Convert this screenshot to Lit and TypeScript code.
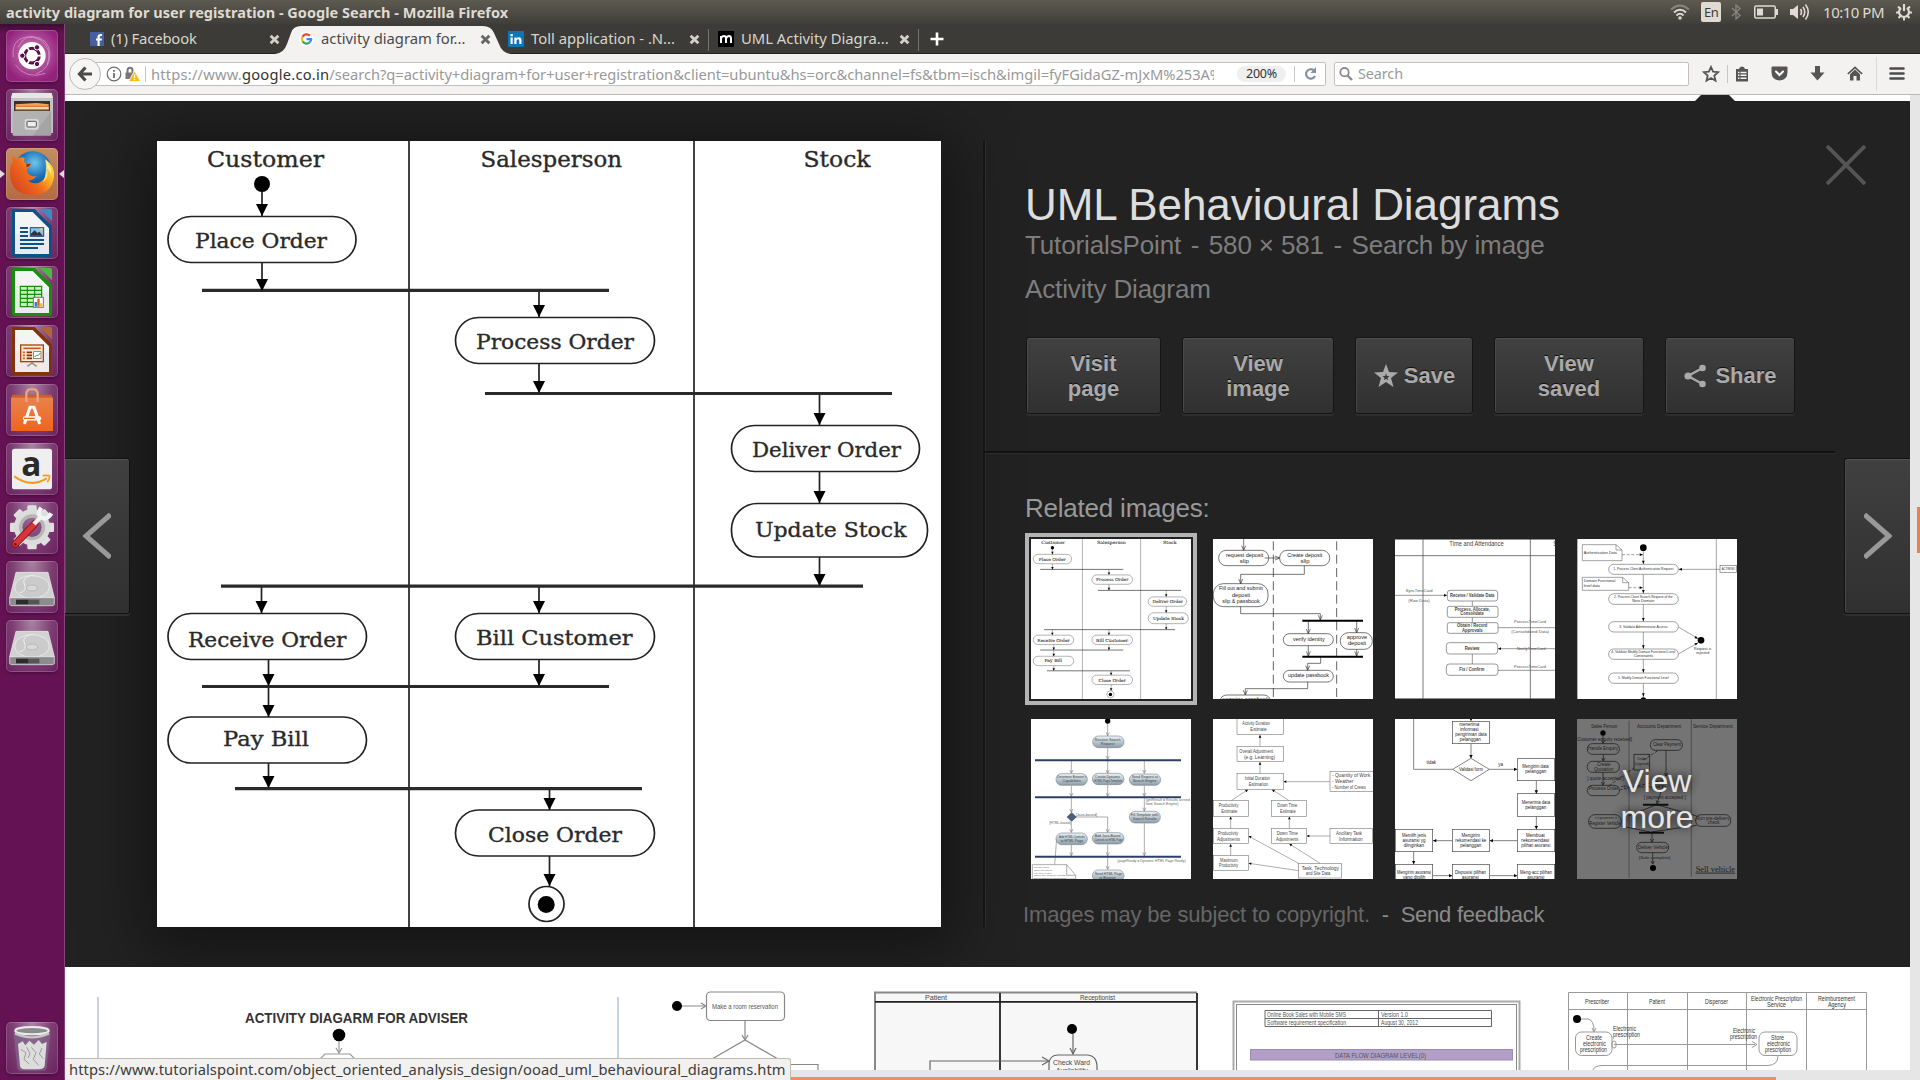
import { LitElement, html, svg, css } from "lit";
import { customElement } from "lit/decorators.js";

/* ---------- drawing helpers ---------- */

// Text squeezed between x1 and x2 on a baseline.
const span = (x1: number, x2: number, y: number, size: number, s: string, cls = "") =>
  svg`<text class=${cls} x=${x1} y=${y} font-size=${size} textLength=${x2 - x1} lengthAdjust="spacingAndGlyphs">${s}</text>`;

const mid = (cx: number, y: number, size: number, s: string) =>
  svg`<text x=${cx} y=${y} font-size=${size} text-anchor="middle">${s}</text>`;

const box = (x: number, y: number, x2: number, y2: number, r = 0) =>
  svg`<rect x=${x} y=${y} width=${x2 - x} height=${y2 - y} rx=${r}></rect>`;

const line = (d: string) => svg`<path d=${d} fill="none"></path>`;

// Solid arrow head whose tip is at x,y; deg 0 points down.
const head = (x: number, y: number, deg = 0, w = 6, h = 12) =>
  svg`<path class="solid" transform="translate(${x} ${y}) rotate(${deg})" d="M0 0L${-w} ${-h}H${w}Z"></path>`;

const open = (x: number, y: number, deg = 0, w = 6, h = 14) =>
  svg`<path transform="translate(${x} ${y}) rotate(${deg})" fill="none" d="M${-w} ${-h}L0 0L${w} ${-h}"></path>`;

const dot = (x: number, y: number, r: number) => svg`<circle class="solid" cx=${x} cy=${y} r=${r}></circle>`;

/* ---------- main activity diagram ---------- */

const orderFlow = () => html`<svg class="dia order" viewBox="157 141 784 786" preserveAspectRatio="none">
  <g stroke="#222" stroke-width="1.7" fill="#fff">
    ${line("M409 141V927M694 141V927")}
    ${box(168, 216.5, 356, 262.5, 23)}${box(455.5, 317.5, 654.5, 363.5, 23)}
    ${box(731.5, 425.5, 919.5, 471.5, 23)}${box(731.5, 503.5, 927.5, 557, 26)}
    ${box(168, 613.5, 366.5, 659.5, 23)}${box(455.5, 613.5, 654.5, 659.5, 23)}
    ${box(168, 717, 366.5, 763, 23)}${box(455.5, 810, 654.5, 856, 23)}
    <circle cx="546.5" cy="904" r="17.5"></circle>
    ${line("M262 184V216M262 263V290M539 290V317M539 364V393M819.5 393V425M819.5 472V503M819.5 557V586M261.5 586V613M539 586V613M268.5 660V686M539 660V686M268.5 687V717M268.5 763V788M549.5 788V810M549.5 856V886")}
  </g>
  <g stroke="#2a2a2a" stroke-width="3.2">
    ${line("M202 290.3H609M485 393.5H892M221 586.2H863M202 686.5H609M235 788.6H642")}
  </g>
  ${dot(262, 184, 8)}${dot(546.2, 904.5, 8.5)}
  ${[[262, 216], [262, 291], [539, 317], [539, 393], [819.5, 425], [819.5, 503], [819.5, 586], [261.5, 613], [539, 613], [268.5, 686], [539, 686], [268.5, 717], [268.5, 788], [549.5, 810], [549.5, 886]].map(([x, y]) => head(x, y))}
  <g class="serif">
    ${span(207, 324, 166.5, 21.5, "Customer")}${span(480.5, 622, 166.5, 21.5, "Salesperson")}${span(803.5, 870.5, 166.5, 21.5, "Stock")}
    ${span(195, 327, 247.7, 20.5, "Place Order")}${span(476, 634, 349, 20.5, "Process Order")}
    ${span(752, 901, 457, 20.5, "Deliver Order")}${span(755, 906.5, 536.5, 20.5, "Update Stock")}
    ${span(188, 346.5, 646.5, 20.5, "Receive Order")}${span(476, 632.5, 645, 20.5, "Bill Customer")}
    ${span(223, 309, 745.5, 20.5, "Pay Bill")}${span(488, 622, 841.5, 20.5, "Close Order")}
  </g>
</svg>`;

/* ---------- thumbnails (each on its own 480-unit canvas) ---------- */

const depositFlow = () => html`<svg class="dia" viewBox="609 177 480 480">
  <g stroke="#333" stroke-width="2" fill="#fff">
    <path fill="none" stroke="#444" stroke-width="2.5" stroke-dasharray="27 13" d="M790 184V657M980 184V657"></path>
    ${box(626, 211, 776, 257, 22)}${box(809, 211, 959, 257, 22)}${box(610, 311, 774, 380, 30)}
    ${box(820, 461, 970, 497, 18)}${box(991, 458, 1087, 508, 24)}${box(820, 571, 970, 606, 18)}${box(630, 645, 782, 690, 20)}
    ${line("M701 177V211M764 234H809M883 257V283H692V311M692 380V401H931V421M895 424V461M1040 424V458M895 497V528M1040 508V528M932 532V550H893V571M893 606V626H706V645")}
    ${open(701, 211)}${open(809, 234, -90)}${open(692, 311)}${open(931, 420)}${open(895, 461)}${open(1040, 458)}${open(895, 528)}${open(1040, 528)}${open(893, 571)}${open(706, 645)}
  </g>
  <path stroke="#000" stroke-width="6" d="M877 422H1059M877 530H1059"></path>
  <g class="sans" fill="#222">
    ${span(648, 760, 230, 18, "request deposit")}${mid(703, 249, 18, "slip")}${span(832, 937, 230, 18, "Create deposit")}${mid(885, 249, 18, "slip")}
    ${span(627, 758, 330, 18, "Fill out and submit")}${mid(693, 350, 17, "deposit")}${span(637, 749, 369, 18, "slip & passbook")}
    ${span(849, 944, 482, 18, "verify identity")}${mid(1041, 476, 17, "approve")}${mid(1041, 496, 17, "deposit")}
    ${span(834, 957, 590, 18, "update passbook")}${span(637, 776, 662, 18, "examine passbook")}
  </g>
</svg>`;

const attendance = () => html`<svg class="dia" viewBox="45 177 480 480">
  <g stroke="#555" stroke-width="2.4" fill="none">${line("M45 178H525M45 227H525M129 177V657M451 177V657M45 656H525")}</g>
  <g stroke="#666" stroke-width="2" fill="#fff">
    ${line("M45 346H200M277 363V379M277 412V428M277 522V552M354 443H525M354 506H525M354 571H525")}
    ${box(202, 331, 353, 363, 8)}${box(202, 379, 354, 412, 6)}${box(202, 428, 354, 460, 6)}${box(199, 488, 353, 522, 9)}${box(199, 552, 354, 586, 9)}
    ${head(201, 346, -90, 4, 9)}${head(354, 506, 90, 4, 9)}
  </g>
  <g class="sans">
    <g fill="#444">${span(208, 371, 197, 19, "Time and Attendance")}${mid(526, 197, 19, "S")}</g>
    <g fill="#555">${span(77, 158, 336, 13, "SyncTimeCard")}${span(85, 149, 365, 13, "(Raw Data)")}${span(402, 498, 428, 13, "ProcessTimeCard")}${span(394, 507, 458, 13, "(Consolidated Data)")}${span(411, 497, 510, 13, "NotifyTimeCard")}${span(402, 498, 563, 13, "ProcessTimeCard")}</g>
    <g font-weight="bold" fill="#444">${span(210, 343, 351, 14, "Receive / Validate Data")}${span(224, 330, 392, 14, "Process, Allocate,")}${span(241, 311, 406, 14, "Consolidate")}${span(231, 322, 441, 14, "Obtain / Record")}${span(246, 308, 455, 14, "Approvals")}${span(254, 298, 509, 14, "Review")}${span(238, 313, 574, 14, "Fix / Confirm")}</g>
  </g>
</svg>`;

const authFlow = () => html`<svg class="dia" viewBox="591 177 480 480">
  <g stroke="#666" stroke-width="1.8" fill="#fff">
    ${line("M592 177V657M1009 177V657M790 203V657M895 268H1020M895 441L953 475M895 522L953 489")}
    <path fill="none" stroke-dasharray="9 5" d="M726 224H788M746 323H788"></path>
    <path d="M607 194H708L726 210V242H607ZM708 194V210H726M607 292H728L746 308V331H607ZM728 292V308H746"></path>
    ${box(686, 253, 895, 283, 15)}${box(686, 341, 895, 373, 16)}${box(686, 425, 895, 456, 15)}${box(686, 507, 895, 538, 15)}${box(686, 579, 895, 610, 15)}${box(1020, 257, 1069, 278)}
  </g>
  ${dot(790, 203, 10)}${dot(963, 481, 10)}${dot(790, 661, 9)}
  ${[252, 340, 424, 506, 578, 650].map((y) => head(790, y, 0, 4, 10))}
  ${head(789, 224, -90, 4, 10)}${head(789, 323, -90, 4, 10)}${head(896, 268, 90, 4, 10)}${head(954, 476, -60, 4, 10)}${head(954, 488, -120, 4, 10)}
  <g class="sans" fill="#333">
    ${span(611, 711, 221, 12, "Authentication Data")}${span(611, 706, 307, 12, "Domain Functional")}${span(611, 660, 320, 12, "level data")}
    ${span(700, 880, 271, 11.5, "1. Process Client Authentication Request")}${span(702, 878, 354, 11.5, "2. Process Client Search Request of the")}${mid(790, 365, 11.5, "New Domain")}
    ${span(718, 862, 444, 11.5, "3. Validate Administrator Access")}${span(694, 886, 520, 11.5, "4. Validate Modify Domain Functional Level")}${mid(790, 530, 11.5, "Constraints")}
    ${span(714, 866, 597, 11.5, "5. Modify Domain Functional Level")}${span(1025, 1066, 271, 10, "ACTIMISO")}${mid(968, 511, 11, "Request is")}${mid(968, 522, 11, "rejected")}
  </g>
</svg>`;

const searchFlow = () => html`<svg class="dia" viewBox="63 717 480 480">
  <defs><linearGradient id="pill" x2="0" y2="1"><stop offset="0" stop-color="#eef3f5"></stop><stop offset="1" stop-color="#8b9ca6"></stop></linearGradient></defs>
  <g stroke="#777" stroke-width="1.8">
    ${line("M293 724V767M293 804V838M184 843V880M293 843V880M403 843V880M184 917V950M293 915V950M403 917V950M403 954V993M184 954V997M199 1011H293V1057M184 1026V1057M184 1095V1128M293 1093V1128M403 1030V1128M293 1132V1168M140 1076L134 1154")}
    ${[[293, 767], [293, 838], [184, 880], [293, 880], [403, 880], [184, 949], [293, 949], [403, 949], [403, 993], [184, 997], [293, 1057], [184, 1057], [184, 1127], [293, 1127], [403, 1127], [293, 1168]].map(([x, y]) => open(x, y, 0, 5, 10))}
    <path fill="#fff" d="M67 1154H170L197 1186V1197H67ZM170 1154V1186H197"></path>
  </g>
  <path stroke="#2c3f66" stroke-width="6" d="M75 841H513M75 952H513M75 1130H513"></path>
  <g fill="url(#pill)" stroke="#7d8d96" stroke-width="2">
    ${box(248, 768, 342, 803, 17)}${box(138, 881, 232, 916, 17)}${box(247, 880, 342, 914, 17)}${box(358, 882, 452, 916, 17)}${box(358, 994, 451, 1029, 17)}${box(138, 1059, 232, 1094, 17)}${box(247, 1058, 342, 1092, 17)}${box(247, 1170, 342, 1204, 17)}
  </g>
  <path fill="#4b5e7c" d="M170 1011L185 997L200 1011L185 1025Z"></path>
  ${dot(293, 723, 8)}
  <g class="sans" fill="#3b464e">
    ${mid(293, 782, 11, "Receive Search")}${mid(293, 794, 11, "Request")}${span(142, 229, 895, 10.5, "Determine Browser's")}${mid(185, 907, 10.5, "Capabilities")}${mid(293, 894, 10.5, "Create Dynamic")}${span(253, 337, 905, 10.5, "HTML Page Template")}${span(365, 444, 895, 11, "Send Request to")}${mid(404, 907, 11, "Search Engine")}
    ${span(362, 445, 1007, 10.5, "Fill Template with")}${mid(404, 1019, 10.5, "Search Results")}${span(147, 224, 1074, 10.5, "Add HTML Controls")}${mid(185, 1085, 10.5, "to HTML Page")}${mid(293, 1072, 10.5, "Add Java-Based")}${span(254, 338, 1083, 10.5, "Controls to HTML Page")}${span(254, 337, 1186, 11, "Send HTML Page")}${mid(293, 1196, 10.5, "to Browser")}
    <g fill="#666">${span(407, 540, 964, 11, "(getResult = Results arrived")}${span(407, 505, 976, 11, "from Search Engine)")}${span(197, 261, 1007, 11, "[Java-based]")}${span(118, 182, 1031, 11, "[HTML-based]")}${span(322, 527, 1147, 11, "(pageReady = Dynamic HTML Page Ready)")}
    ${span(71, 118, 1165, 7.5, "Navigation controls,")}${span(71, 126, 1173, 7.5, "whether Java-based or")}${span(71, 124, 1181, 7.5, "HTML-based, are added")}${span(71, 166, 1189, 7.5, "when the search results")}${span(71, 168, 1196, 7.5, "are available in HTML form")}</g>
  </g>
</svg>`;

const durationFlow = () => html`<svg class="dia" viewBox="609 717 480 480">
  <g stroke="#777" stroke-width="1.8" fill="#fff">
    ${box(681, 715, 820, 763)}${box(681, 799, 820, 845)}${box(681, 881, 820, 928)}${box(960, 875, 1092, 934)}${box(610, 962, 715, 1009)}${box(785, 962, 889, 1009)}
    ${box(610, 1045, 715, 1090)}${box(785, 1045, 889, 1090)}${box(960, 1045, 1088, 1090)}${box(610, 1126, 715, 1172)}${box(866, 1150, 995, 1194)}
    ${line("M750 799V765M750 881V847M960 905H822M664 962L713 929M837 962L787 929M662 1045V1011M838 1045V1011M960 1068H891M662 1126V1092M866 1150L717 1069M930 1150L839 1092M866 1172L717 1150")}
  </g>
  ${[[750, 765, 180], [750, 846, 180], [821, 905, 90], [714, 929, -124], [786, 929, 124], [662, 1010, 180], [838, 1010, 180], [890, 1068, 90], [662, 1092, 180], [716, 1068, 118], [838, 1092, 122], [716, 1150, 98]].map(([x, y, d]) => head(x, y, d, 4, 8))}
  <g class="sans" fill="#444">
    ${span(697, 780, 736, 15, "Activity Duration")}${span(721, 770, 753, 15, "Estimate")}${span(688, 789, 818, 15, "Overall Adjustment")}${span(702, 795, 836, 15, "(e.g. Learning)")}${span(704, 780, 900, 15, "Initial Duration")}${span(716, 774, 917, 15, "Estimation")}
    ${span(966, 1081, 892, 15, "- Quantity of Work")}${span(966, 1030, 908, 15, "- Weather")}${span(966, 1067, 926, 15, "- Number of Crews")}
    ${span(626, 685, 981, 15, "Productivity")}${span(634, 682, 999, 15, "Estimate")}${span(802, 862, 981, 15, "Down Time")}${span(810, 857, 999, 15, "Estimate")}
    ${span(624, 685, 1064, 15, "Productivity")}${span(621, 690, 1082, 15, "Adjustments")}${span(800, 864, 1064, 15, "Down Time")}${span(798, 865, 1082, 15, "Adjustments")}${span(978, 1056, 1064, 15, "Ancillary Task")}${span(987, 1058, 1082, 15, "Information")}
    ${span(630, 683, 1145, 15, "Maximum")}${span(627, 684, 1162, 15, "Productivity")}${span(875, 987, 1169, 15, "Task, Technology")}${span(887, 961, 1185, 15, "and Site Data")}
  </g>
</svg>`;

const insuranceFlow = () => html`<svg class="dia" viewBox="45 717 480 480">
  <g stroke="#444" stroke-width="2" fill="#fff">
    ${line("M101 717V868H218M273 791V835M328 868H412M469 902V941M469 1009V1048M412 1082H330M217 1082H159M101 1115V1153M158 1187H217M328 1187H412")}
    ${box(217, 724, 328, 791)}<path d="M273 835L328 868L273 902L218 868Z"></path>
    ${box(412, 836, 524, 902)}${box(412, 941, 524, 1009)}${box(412, 1048, 524, 1115)}${box(217, 1048, 328, 1115)}${box(46, 1048, 158, 1115)}${box(46, 1153, 158, 1220)}${box(217, 1153, 328, 1220)}${box(412, 1153, 524, 1220)}
  </g>
  ${[[273, 724, 0], [273, 835, 0], [412, 868, -90], [469, 941, 0], [469, 1048, 0], [329, 1082, 90], [159, 1082, 90], [101, 1153, 0], [217, 1187, -90], [412, 1187, -90]].map(([x, y, d]) => head(x, y, d, 5, 10))}
  <g class="sans" fill="#222">
    ${mid(268, 738, 13.5, "menerima")}${mid(268, 753, 13.5, "informasi")}${span(226, 320, 768, 13.5, "pengiriman data")}${mid(271, 783, 13.5, "pelanggan")}${span(237, 309, 872, 13.5, "Validasi form")}${mid(154, 852, 13.5, "tidak")}${mid(362, 857, 13.5, "ya")}
    ${span(427, 506, 864, 13.5, "Mengirim data")}${mid(467, 879, 13.5, "pelanggan")}${span(425, 510, 972, 13.5, "Menerima data")}${mid(467, 987, 13.5, "pelanggan")}
    ${mid(466, 1071, 13.5, "Membuat")}${span(424, 508, 1085, 13.5, "rekomendasi")}${span(424, 511, 1100, 13.5, "pilihan asuransi")}${mid(272, 1071, 13.5, "Mengirim")}${span(226, 319, 1085, 13.5, "rekomendasi ke")}${mid(272, 1100, 13.5, "pelanggan")}
    ${span(66, 138, 1071, 13.5, "Memilih jenis")}${mid(102, 1085, 13.5, "asuransi yg")}${mid(102, 1100, 13.5, "diinginkan")}${span(51, 153, 1183, 13.5, "Mengirim asuransi")}${mid(102, 1197, 13.5, "yang dipilih")}${span(225, 318, 1183, 13.5, "Disposisi pilihan")}${mid(271, 1197, 13.5, "asuransi")}${span(420, 516, 1183, 13.5, "Meng-acc pilihan")}${mid(467, 1197, 13.5, "asuransi")}
  </g>
</svg>`;

const vehicleFlow = () => html`<svg class="dia dim" viewBox="591 717 480 480">
  <g stroke="#222" stroke-width="2.4" fill="none">
    <path stroke="#444" d="M747 722V1193M934 717V1190"></path>
    ${box(622, 791, 718, 823, 15)}${box(622, 844, 718, 877, 15)}${box(622, 916, 718, 947, 15)}${box(811, 779, 907, 811, 15)}${box(762, 823, 809, 870)}${box(626, 1004, 724, 1045, 19)}${box(947, 1004, 1052, 1039, 16)}${box(770, 1087, 866, 1118, 15)}
    ${line("M669 766V790M670 823V843M669 877V916M858 811V888M850 915L830 972M830 974L745 1008M830 974L950 1008M724 1038L810 1056M950 1036L815 1056M816 1060V1086M818 1118V1152")}
    <path stroke-dasharray="9 5" d="M688 917L762 864M790 840L835 811M850 900L718 930"></path>
    ${open(669, 790, 0, 5, 9)}${open(670, 843, 0, 5, 9)}${open(669, 915, 0, 5, 9)}${open(858, 888, 0, 5, 9)}${open(832, 971, 10, 5, 9)}${open(816, 1086, 0, 5, 9)}${open(818, 1152, 0, 5, 9)}
    <path stroke="#111" stroke-width="6" d="M789 974H865M777 1058H852"></path>
  </g>
  ${dot(669, 759, 8)}${dot(819, 1164, 9)}
  <g class="sans" fill="#1c1c1c">
    ${span(633, 712, 745, 13.5, "Sales Person")}${span(771, 903, 745, 13.5, "Accounts Department")}${span(939, 1058, 745, 13.5, "Service Department")}${span(592, 756, 783, 13.5, "Customer enquiry received]")}
    ${span(624, 714, 811, 13.5, "Handle Enquiry")}${mid(671, 859, 13.5, "Create")}${mid(671, 873, 13.5, "Quotation")}${span(622, 731, 900, 13.5, "[ quote accepted ]")}${span(626, 716, 931, 13.5, "Process Order")}${span(819, 903, 799, 13.5, "Clear Payment")}${mid(786, 839, 12, "Order")}${mid(786, 855, 12, "[signed]")}
    ${span(722, 858, 924, 13, "«Payment unpaid?»")}${span(791, 917, 956, 13.5, "[ payment accepted ]")}${mid(678, 1017, 13, "<<parent>>")}${span(628, 722, 1035, 13.5, "Register Vehicle")}${span(949, 1049, 1020, 13.5, "Run pre-delivery")}${mid(1001, 1033, 13.5, "check")}${span(774, 864, 1107, 13.5, "Deliver Vehicle")}${span(777, 871, 1138, 13, "[Sale complete]")}
  </g>
  <text class="times" x="947" y="1175" font-size="25" textLength="118" text-decoration="underline">Sell vehicle</text>
</svg>`;

/* ---------- next row of results, cut off by the window ---------- */

const resultsStrip = () => html`<svg class="strip" viewBox="65 967 1845 103">
  <path stroke="#c3d2e8" stroke-width="2" d="M98 997V1070M618 997V1070"></path>
  <g class="sans" font-weight="bold" fill="#333">${span(245, 468, 1022.7, 14, "ACTIVITY DIAGARM FOR ADVISER")}</g>
  ${dot(339, 1035, 6.3)}
  <g stroke="#999" fill="none" stroke-width="1.2">${line("M339 1041V1053M316 1063L325 1054H350L359 1063")}${open(339, 1053, 0, 3, 5)}</g>
  ${dot(677, 1006, 5)}
  <g stroke="#888" fill="#fff" stroke-width="1.2">
    ${line("M682 1006H705M745 1021V1040M712 1059L745 1040L778 1059M790 1064.5H818V1070")}${box(706.5, 992, 784.5, 1020.5, 4)}${open(706, 1006, -90, 3, 5)}${open(745, 1040, 0, 3, 5)}
  </g>
  <g class="sans" fill="#555">${span(712, 778, 1008.5, 8, "Make a room reservation")}</g>
  <rect x="875" y="992.5" width="322" height="90" fill="#f7f7f7"></rect>
  <g stroke="#222" fill="none"><path stroke="#888" stroke-width="2" d="M875 1070V992.5H1197"></path><path stroke-width="1.8" d="M875 1001.8H1197V1070M1197 993V1070M1000 993V1070"></path>
    <g stroke="#666" stroke-width="1.2">${line("M930 1070V1061H1048M1073 1034V1054M1049 1070V1063Q1050 1055 1058 1055H1088Q1096 1056 1097 1065V1070")}${open(1073, 1054, 0, 3, 6)}${open(1049, 1061, -90, 4, 7)}</g></g>
  ${dot(1072, 1029, 5)}
  <g class="sans" fill="#444">${span(925, 947, 1000, 7.5, "Patient")}${span(1080, 1115, 1000, 7.5, "Receptionist")}${span(1053, 1090, 1065, 8, "Check Ward")}${span(1056, 1088, 1073, 8, "Availability")}</g>
  <g fill="#fff" stroke="#888"><rect x="1233.5" y="1001.5" width="286" height="90" stroke="#aaa" stroke-width="2"></rect><rect x="1236.5" y="1004.5" width="280" height="90"></rect>
    <path fill="none" stroke="#666" d="M1265 1010.5H1491.5V1026.5H1265ZM1265 1018.5H1491M1378.5 1010V1026"></path></g>
  <rect x="1250.5" y="1049.5" width="262" height="10.5" fill="#b19fc8" stroke="#9b8ab3"></rect>
  <g class="sans" fill="#555">${span(1267, 1346, 1017, 7.5, "Online Book Sales with Mobile SMS")}${span(1381, 1408, 1017, 7.5, "Version 1.0")}${span(1267, 1346, 1025, 7.5, "Software requirement specification")}${span(1381, 1418, 1025, 7.5, "August 30, 2012")}${span(1335, 1426, 1057.5, 7.5, "DATA FLOW DIAGRAM LEVEL(0)")}</g>
  <g stroke="#999" fill="none"><path d="M1568.5 1070V992.5H1866.5V1070M1568 1009.5H1866M1627.5 993V1070M1687.5 993V1070M1746.5 993V1070M1806.5 993V1070"></path>
    <g fill="#fff">${box(1575.5, 1032, 1612, 1055.5, 6)}${box(1759, 1032, 1797, 1055.5, 6)}</g>
    ${line("M1581 1019H1588Q1594 1020 1594 1031M1614 1044.5H1755M1778 1056Q1778 1065 1768 1065.5H1602Q1594 1066 1593 1070")}${open(1594, 1032, 0, 2, 4)}${open(1757, 1044.5, -90, 3, 5)}${box(1612, 1041, 1616, 1048, 2)}</g>
  ${dot(1577, 1019, 4)}
  <g class="sans" fill="#333">${span(1585, 1609, 1004, 6.5, "Prescriber")}${span(1649, 1665, 1004, 6.5, "Patient")}${span(1705, 1728, 1004, 6.5, "Dispenser")}${span(1751, 1802, 1000.5, 6.5, "Electronic Prescription")}${span(1767, 1786, 1007, 6.5, "Service")}${span(1818, 1855, 1000.5, 6.5, "Reimbursement")}${span(1828, 1846, 1007, 6.5, "Agency")}
  ${span(1586, 1602, 1040, 6.5, "Create")}${span(1583, 1606, 1046, 6.5, "electronic")}${span(1580, 1607, 1052, 6.5, "prescription")}${span(1771, 1784, 1040, 6.5, "Store")}${span(1767, 1790, 1046, 6.5, "electronic")}${span(1765, 1791, 1052, 6.5, "prescription")}${span(1613, 1636, 1031, 6.5, "Electronic")}${span(1613, 1640, 1037, 6.5, "prescription")}${span(1733, 1755, 1033, 6.5, "Electronic")}${span(1730, 1757, 1039, 6.5, "prescription")}</g>
</svg>`;

/* ---------- launcher icons, 156-unit tiles ---------- */

const officeDoc = (c: string, light: string, inner: unknown) => svg`
  <path fill=${c} d="M22 6H86L138 58V144Q138 150 132 150H24Q18 150 18 144V10Q18 6 22 6Z"></path>
  <path fill="#f4f4f4" d="M27 15H80L129 64V141H27Z"></path><path fill="#e2e2e2" d="M27 80H129V141H27Z" opacity=".5"></path>
  <path fill=${light} d="M101 6H132Q138 6 138 12V43Z"></path>${inner}`;

const disk = svg`
  <path fill="#d2d2d2" stroke="#f2f2f2" stroke-width="2" d="M30 34H126L145 110H11Z"></path>
  <ellipse cx="78" cy="78" rx="52" ry="34" fill="#cbcbcb" stroke="#ececec" stroke-width="2.5"></ellipse>
  <ellipse cx="78" cy="81" rx="17" ry="9" fill="#d8d8d8" stroke="#aaa" stroke-width="2"></ellipse>
  <path fill="none" stroke="#eee" stroke-width="3" d="M40 96Q66 90 54 66Q48 48 82 42"></path>
  <path fill="#8c8c8c" stroke="#eee" stroke-width="2" d="M11 110H145V130Q144 134 138 134H18Q12 134 11 130Z"></path>
  <path fill="#2c2c2c" d="M30 116H68V130H30Z"></path><path fill="#555" d="M68 116H100V130H68Z"></path>`;

const gearTeeth = [0, 45, 90, 135, 180, 225, 270, 315].map(
  (a) => svg`<rect x="64" y="10" width="28" height="26" rx="4" transform="rotate(${a} 78 76)"></rect>`
);

const launcher: { cls?: string; art: unknown }[] = [
  { cls: "dash", art: svg`
    <path fill="none" stroke="#d79aca" stroke-width="3" opacity=".75" d="M22 82Q14 20 78 20Q128 22 132 72Q132 116 90 132M36 52Q58 4 104 30Q140 56 124 104M28 104Q60 150 118 130"></path>
    <circle cx="78" cy="77" r="41" fill="#fff"></circle>
    <circle cx="78" cy="77" r="22" fill="none" stroke="#5a1145" stroke-width="9"></circle>
    <path stroke="#fff" stroke-width="5" d="M78 77L110 77M78 77L62 49M78 77L62 105"></path>
    <g fill="#5a1145" stroke="#fff" stroke-width="3"><circle cx="49" cy="77" r="8"></circle><circle cx="93" cy="52" r="8"></circle><circle cx="93" cy="102" r="8"></circle></g>
    <circle cx="78" cy="77" r="16" fill="#fff"></circle>` },
  { art: svg`
    <path fill="#c4c4c4" d="M19 12H137L141 30V132H15V30Z"></path><path fill="#e6e6e6" d="M19 12H137L141 27H15Z"></path>
    <path fill="#333" d="M24 36H132V66H24Z"></path><path fill="#f2a45f" d="M29 46L92 42L128 46V64H29Z"></path><path fill="#e06a2c" d="M29 50H128V53H29ZM29 60H128V63H29Z"></path><path fill="#fbe3c8" d="M29 55H128V59H29Z"></path>
    <path fill="#a4a4a4" d="M20 66H136V136Q136 140 132 140H24Q20 140 20 136Z"></path><path fill="#bdbdbd" d="M20 66H136L80 140H24Q20 140 20 136Z" opacity=".6"></path>
    <rect x="56" y="90" width="42" height="32" rx="6" fill="#d8d8d8"></rect><rect x="63" y="97" width="28" height="17" rx="2" fill="#eee" stroke="#555" stroke-width="3"></rect>` },
  { cls: "fox running", art: svg`
    <defs><radialGradient id="globe" cx=".55" cy=".3" r=".7"><stop offset="0" stop-color="#6fc7ee"></stop><stop offset=".5" stop-color="#1f72b8"></stop><stop offset="1" stop-color="#123a78"></stop></radialGradient>
    <linearGradient id="fur" x1="1" y1="0" x2="0" y2=".7"><stop offset="0" stop-color="#fff36a"></stop><stop offset=".35" stop-color="#fbb024"></stop><stop offset=".6" stop-color="#ef6b1e"></stop><stop offset="1" stop-color="#d9451b"></stop></linearGradient></defs>
    <circle cx="80" cy="68" r="58" fill="url(#globe)"></circle>
    <path fill="url(#fur)" d="M18 26Q26 26 32 34Q44 24 56 31Q52 40 58 46L74 47Q76 54 64 60Q60 72 70 80Q82 88 92 84Q82 98 66 98Q96 118 118 88Q130 66 118 34Q148 54 144 88Q136 140 80 142Q16 138 12 80Q10 52 20 44Z"></path>
    <path fill="#fff19a" d="M118 34Q140 56 136 84Q130 66 124 62Q128 90 112 102Q124 72 118 34Z" opacity=".8"></path>
    <path fill="#a92d10" d="M60 47L74 47Q74 54 62 58Z"></path>` },
  { art: officeDoc("#0b5286", "#3a8bc0", svg`
    <path stroke="#0b5286" stroke-width="6" d="M42 63H66M42 75H66M42 87H66M42 99H114M42 111H114M42 123H96"></path>
    <rect x="73" y="62" width="40" height="26" fill="#8dc1e6" stroke="#0b5286" stroke-width="3"></rect><path fill="#333" d="M75 86V80L86 70L94 78L100 74L111 86Z"></path><circle cx="106" cy="67" r="4" fill="#f5c842"></circle>`) },
  { art: officeDoc("#178e0c", "#4cb83c", svg`
    <rect x="42" y="60" width="66" height="62" fill="#c9f3bd"></rect><path fill="none" stroke="#178e0c" stroke-width="3.5" d="M43 61H107V122H43ZM43 73H107M43 85H107M43 97H107M43 109H107M64 61V122M86 61V122"></path>
    <rect x="82" y="94" width="30" height="30" fill="#fff" stroke="#777" stroke-width="3"></rect><path fill="#1c83d1" d="M86 108H93V122H86Z"></path><path fill="#e25c1c" d="M94 98H101V122H94Z"></path><path fill="#f0c11e" d="M102 112H109V122H102Z"></path>`) },
  { art: officeDoc("#843208", "#b0663a", svg`
    <path stroke="#8b8b8b" stroke-width="4" fill="none" d="M78 110V118M64 124L78 114L92 124"></path><rect x="44" y="60" width="68" height="50" fill="#fde9d8" stroke="#a5420b" stroke-width="4"></rect>
    <path stroke="#cf5a1e" stroke-width="5" d="M52 70H104"></path><path stroke="#cf6a2e" stroke-width="5" d="M50 82H57M50 91H57M50 100H57"></path><path stroke="#843208" stroke-width="5" d="M62 82H78M62 91H78M62 100H78"></path><rect x="83" y="80" width="22" height="21" fill="#fff" stroke="#555" stroke-width="2"></rect><path fill="none" stroke="#26a33a" stroke-width="3" d="M86 96L92 90L96 92L103 84"></path>`) },
  { art: svg`
    <defs><linearGradient id="bag" x2="0" y2="1"><stop offset="0" stop-color="#e8824c"></stop><stop offset="1" stop-color="#f1641e"></stop></linearGradient></defs>
    <path fill="#c9602c" d="M20 32H136L140 42H15Z"></path><rect x="15" y="41" width="126" height="100" fill="url(#bag)"></rect>
    <path fill="none" stroke="#f0a37c" stroke-width="7" d="M61 54V30Q62 16 72 16H84Q94 16 95 30V54"></path>
    <path fill="none" stroke="#fff" stroke-width="9" d="M55 120L72 70H84L101 120"></path><path stroke="#fff" stroke-width="13" stroke-linecap="round" d="M57 103H99"></path><path stroke="#e8641e" stroke-width="4" d="M54 103H86"></path>` },
  { art: svg`
    <rect x="18" y="17" width="120" height="122" rx="8" fill="#efefef"></rect><text class="letter" x="76" y="100" font-size="100" text-anchor="middle">a</text>
    <path fill="none" stroke="#f79a1b" stroke-width="6" d="M25 100Q74 136 122 106"></path><path fill="none" stroke="#f79a1b" stroke-width="5" d="M110 98Q128 96 131 99Q131 108 124 118"></path>` },
  { art: svg`
    <g fill="#e0e0e0">${gearTeeth}</g><circle cx="78" cy="76" r="42" fill="none" stroke="#dcdcdc" stroke-width="24"></circle><circle cx="78" cy="76" r="34" fill="none" stroke="#b5b5b5" stroke-width="10"></circle>
    <path stroke="#7d1113" stroke-width="22" stroke-linecap="round" d="M28 126L86 66"></path><path stroke="#d8343a" stroke-width="17" stroke-linecap="round" d="M28 126L86 66"></path>
    <path fill="none" stroke="#f3f3f3" stroke-width="13" d="M84 66L104 46M106 17Q92 36 106 46Q122 56 136 34"></path><circle cx="28" cy="127" r="4" fill="#7d1113"></circle>` },
  { art: disk },
  { art: disk },
];

const trash = svg`
  <path fill="#83688a" opacity=".7" d="M22 26H134L122 138Q120 146 112 146H44Q36 146 34 138Z"></path>
  <ellipse cx="78" cy="26" rx="50" ry="11" fill="#8c8c8c" stroke="#ececec" stroke-width="6"></ellipse><path fill="none" stroke="#c9c9c9" stroke-width="7" d="M27 34Q78 58 129 34"></path>
  <path fill="#dcdcdc" d="M36 66L50 58L58 70L70 56L84 68L98 54L108 66L122 60L116 132Q112 142 98 142H56Q44 142 42 132Z"></path>
  <path fill="none" stroke="#9c9c9c" stroke-width="3" d="M44 82L60 92L54 112L70 126M76 76L90 92L82 112L98 130M108 78L100 96L112 110M62 76L72 94L66 108"></path>`;

const closeGlyph = html`<svg class="tx" viewBox="0 0 10 10"><path d="M1.500 1.500L8.500 8.500M8.500 1.500L1.500 8.500"></path></svg>`;

@customElement("app-root")
export class AppRoot extends LitElement {
  static styles = css`
    :host { display: block; width: 1920px; height: 1080px; overflow: hidden; background: #222; font-family: "Liberation Sans", Arial, sans-serif; }
    * { box-sizing: border-box; }
    svg { display: block; flex: none; }
    .screen { display: flex; flex-direction: column; width: 1920px; height: 1080px; }
    .ui { font-family: "Noto Sans", "Open Sans", sans-serif; font-size: 15px; white-space: nowrap; }

    .panel { height: 24px; flex: none; display: flex; align-items: center; background: linear-gradient(#5d5a50, #3f3e3a); color: #dfdbd2; padding: 0 8px 0 6px; }
    .panel .title { font-weight: bold; font-size: 14.5px; letter-spacing: .02px; line-height: 24px; }
    .tray { margin-left: auto; display: flex; align-items: center; height: 24px; }
    .en { width: 20px; height: 20px; border-radius: 2px; background: #dfdbd2; color: #3c3b37; font-size: 13px; line-height: 20px; text-align: center; letter-spacing: -.5px; margin: 0 10px 0 11px; }
    .battery { margin-left: 13px; }
    .volume { margin-left: 12px; }
    .clock { font-size: 15px; letter-spacing: -.5px; margin: 0 12px 0 13px; line-height: 24px; }

    .body { display: flex; flex: 1; min-height: 0; }
    .dock { width: 65px; flex: none; background: linear-gradient(#3c0c33, #641253 9px); border-right: 1px solid #84467a; padding: 6px 0 6px 6px; display: flex; flex-direction: column; gap: 7px; }
    .tile { width: 52px; height: 52px; border-radius: 5px; position: relative; background: radial-gradient(ellipse at 50% 0, #a884a3 0, #7d3d72 55%, #6a2260 100%); box-shadow: inset 0 0 0 1px rgba(255,255,255,.18), 0 1px 3px rgba(0,0,0,.35); flex: none; }
    .tile svg { width: 52px; height: 52px; }
    .tile.dash { background: radial-gradient(circle at 50% 45%, #d084bb, #93227c 75%); }
    .tile.fox { background: linear-gradient(#c48d62, #b46a42); }
    .tile.running::before, .tile.running::after { content: ""; position: absolute; top: 22px; border: 4px solid transparent; }
    .tile.running::before { left: -6px; border-left: 5px solid #ddd; border-right: 0; }
    .tile.running::after { right: -6px; border-right: 5px solid #ddd; border-left: 0; }
    .tile:last-child { margin-top: auto; }
    .letter { font-family: "Open Sans", sans-serif; font-weight: bold; fill: #2a2a2a; }

    .window { flex: 1; min-width: 0; display: flex; flex-direction: column; position: relative; }
    .tabs { height: 30px; flex: none; background: #3c3b37; border-bottom: 1px solid #24231f; display: flex; align-items: center; color: #d9d5cc; padding-left: 25px; }
    .tabs .ui { font-size: 14.8px; line-height: 29px; height: 30px; }
    .tab { display: flex; align-items: center; height: 30px; position: relative; padding-top: 1px; }
    .tab .label { margin-left: 7px; }
    .tab .tx { margin-left: auto; }
    .t1 { width: 190px; } .t2 { width: 211px; color: #4a4a4a; } .t3 { width: 218px; padding-left: 17px; } .t4 { width: 210px; padding-left: 9px; }
    .t1 .label { letter-spacing: -.15px; }
    .t2 .shape { position: absolute; left: -5px; top: 2px; }
    .t2 .fav, .t2 .label, .t2 .tx { position: relative; }
    .t2 { padding-left: 19px; }
    .t3::after, .t4::after { content: ""; position: absolute; right: 0; top: 5px; width: 1px; height: 22px; background: #77756f; }
    .tx { width: 11px; height: 11px; fill: none; stroke: #d4d0c8; stroke-width: 2.6; }
    .t3 .tx, .t4 .tx { margin-right: 9px; }
    .t2 .tx { stroke: #666; margin-right: 0; }
    .plus { margin-left: 11px; margin-top: 1px; }

    .nav { height: 41px; flex: none; background: #f3f2f1; border-bottom: 1px solid #bcbab6; display: flex; align-items: center; padding: 0 0 1px 4px; }
    .back { width: 32px; height: 32px; border-radius: 16px; border: 1px solid #bbb9b6; background: #f7f6f5; flex: none; position: relative; display: grid; place-items: center; }
    .url { width: 1232px; height: 24px; margin-left: -7px; border: 1px solid #c2c0bd; border-left: 0; border-radius: 0 2px 2px 0; background: #fff; display: flex; align-items: center; padding-left: 12px; color: #999; }
    .url .lock { margin: 0 4px 0 2px; }
    .url .address { font-size: 14.7px; line-height: 22px; width: 1063px; overflow: hidden; margin-left: 5px; }
    .url .scheme { letter-spacing: .2px; }
    .url b { font-weight: normal; color: #333; letter-spacing: .22px; }
    .url .query { letter-spacing: -.03px; }
    .bar { width: 1px; height: 16px; background: #c8c6c3; flex: none; }
    .bar.zoom { margin: 0 9px 0 8px; }
    .bar.mark { margin: 0 7px 0 7px; height: 18px; }
    .bar.menu { margin: 0 12px 0 13px; height: 34px; background: #dddbd8; }
    .pill { width: 49px; height: 16px; border-radius: 8px; background: #efefef; color: #333; font-size: 12.5px; line-height: 16px; text-align: center; letter-spacing: -.2px; margin-left: 23px; }
    .search { width: 355px; height: 24px; margin-left: 8px; border: 1px solid #c2c0bd; border-radius: 2px; background: #fff; display: flex; align-items: center; padding-left: 4px; gap: 5px; color: #999; }
    .search .ui { font-size: 14.4px; line-height: 22px; letter-spacing: -.1px; }
    .tools { flex: 1; display: flex; align-items: center; height: 40px; padding-left: 13px; }
    .pocket { margin-left: 22px; } .down { margin-left: 22px; } .home { margin-left: 22px; }

    .page { flex: 1; min-height: 0; display: grid; grid-template-columns: 1845px 10px; grid-template-rows: 975px 10px; background: #fff; }
    .view { display: flex; flex-direction: column; }
    .notch { height: 6px; flex: none; padding-left: 1630px; background: #fff; }
    .viewer { height: 866px; flex: none; background: #222; display: flex; align-items: flex-start; overflow: hidden; }
    .arrow { height: 156px; margin-top: 357px; flex: none; border: 1px solid #111; background: linear-gradient(#404040, #303030); box-shadow: inset 0 1px 0 #555, inset 1px 0 0 #4a4a4a, 0 2px 0 #303030; display: flex; align-items: center; position: relative; z-index: 1; }
    .arrow.l { width: 65px; border-left: 0; border-radius: 0 3px 3px 0; padding-left: 18px; }
    .arrow.r { width: 66px; border-right: 0; border-radius: 3px 0 0 3px; padding-left: 19px; margin-left: auto; }
    .photo { width: 784px; height: 786px; margin: 40px 0 0 27px; background: #fff; box-shadow: 0 10px 60px 14px rgba(0,0,0,.42); flex: none; }
    .dia { width: 100%; height: 100%; background: #fff; }
    .details { width: 900px; height: 786px; margin: 40px 0 0 42px; border-left: 2px solid #141414; box-shadow: -1px 0 0 #222, inset 1px 0 0 #2d2d2d; display: flex; flex-direction: column; position: relative; }
    .info { height: 312px; width: 850px; border-bottom: 2px solid #121212; box-shadow: 0 1px 0 #2c2c2c; padding: 38px 0 0 40px; color: #7d7d7d; font-size: 26px; letter-spacing: -.13px; flex: none; }
    .info h1 { margin: 0; font-weight: normal; font-size: 44px; line-height: 52px; height: 51px; color: #ddd; letter-spacing: -.06px; }
    .info p { margin: 0; line-height: 30px; }
    .meta { display: flex; gap: 9.5px; }
    .info .desc { margin-top: 14px; }
    .buttons { display: flex; margin: 33px 0 0 1px; gap: 21px; letter-spacing: 0; }
    .btn { height: 77px; border: 1px solid #151515; border-radius: 3px; background: linear-gradient(#414141, #303030); box-shadow: inset 0 1px 0 #505050, inset 1px 0 0 #484848, 0 2px 0 #2e2e2e; color: #aaa; font-weight: bold; font-size: 22px; line-height: 25px; text-align: center; display: flex; align-items: center; justify-content: center; gap: 6px; text-shadow: 0 -1px 0 #111; }
    .b1 { width: 135px; } .b2 { width: 152px; } .b3 { width: 118px; padding-left: 1px; } .b4 { width: 150px; } .b5 { width: 130px; gap: 8px; padding-left: 1px; }
    .x { position: absolute; left: 841px; top: 4px; }
    .related { padding: 39px 0 0 34px; }
    .related h2 { margin: 0 0 15px 6px; font-weight: normal; font-size: 26px; line-height: 32px; color: #999; letter-spacing: -.22px; }
    .grid { display: grid; grid-template-columns: repeat(4, 160px); grid-auto-rows: 160px; column-gap: 22px; row-gap: 20px; padding-left: 12px; }
    .cell { position: relative; overflow: hidden; background: #fff; }
    .cell.on { overflow: visible; outline: 4px solid #b4b4b4; outline-offset: 2px; }
    .more { position: absolute; inset: 0; display: grid; place-content: center; text-align: center; color: #e6e6e6; font-size: 32px; line-height: 35.5px; text-shadow: 0 0 10px #000; padding-top: 1px; }
    .foot { font-size: 22px; line-height: 26px; margin: 23px 0 0 4px; color: #666; letter-spacing: -.15px; }
    .foot span { color: #8a8a8a; letter-spacing: -.25px; }
    .strip { width: 1845px; height: 103px; background: #fff; }
    .vbar { background: #e6e6e6; padding: 412px 0 0 7px; }
    .vbar div { width: 3px; height: 46px; background: #e9814f; }
    .hbar { grid-column: 1 / 3; background: #e6e6e6; padding-top: 7px; }
    .hbar div { height: 3px; width: 1711px; background: #f08d63; }
    .status { position: absolute; left: 0; bottom: 0; width: 726px; height: 22px; background: #f2f1f0; border: 1px solid #bdbbb8; border-left: 0; border-bottom: 0; border-radius: 0 3px 0 0; color: #3c3c3c; font-size: 14.7px; letter-spacing: .09px; line-height: 21px; padding-left: 4px; overflow: hidden; }

    text { stroke: none; }
    .solid { fill: #000; stroke: none; }
    .serif { font-family: "DejaVu Serif", serif; fill: #2a2a2a; }
    .serif text { stroke: #2a2a2a; stroke-width: .35px; }
    .sans { font-family: "Liberation Sans", sans-serif; }
    .times { font-family: "Liberation Serif", serif; fill: #1c1c1c; }
    .dim { background: #747474; }
  `;

  render() {
    return html`<div class="screen">
      <div class="panel ui">
        <span class="title">activity diagram for user registration - Google Search - Mozilla Firefox</span>
        <div class="tray">
          <svg width="20" height="16" viewBox="0 0 20 16" fill="none" stroke="#dfdbd2" stroke-width="2"><path stroke="#8a877e" d="M1 5.500Q10 -2.500 19 5.500"></path><path d="M4 8.500Q10 3 16 8.500M6.500 11.500Q10 8 13.500 11.500"></path><circle cx="10" cy="14" r="1" stroke-width="1.500"></circle></svg>
          <div class="en">En</div>
          <svg width="10" height="16" viewBox="0 0 10 16" fill="none" stroke="#8a877e" stroke-width="1.300"><path d="M1 4L9 11.500L5 15V1L9 4.500L1 12"></path></svg>
          <svg class="battery" width="24" height="14" viewBox="0 0 24 14"><rect x=".75" y="1" width="20.500" height="12" rx="1.500" fill="none" stroke="#dfdbd2" stroke-width="1.500"></rect><path fill="#dfdbd2" d="M3 3.500H9V10.500H3ZM22 4H24V10H22Z"></path></svg>
          <svg class="volume" width="20" height="18" viewBox="0 0 20 18"><path fill="#dfdbd2" d="M0 6H3L8 2V16L3 12H0Z"></path><path fill="none" stroke="#dfdbd2" stroke-width="1.600" d="M10.500 6Q12.500 9 10.500 12M13 4Q16.500 9 13 14M15.500 1.500Q21 9 15.500 16.500"></path></svg>
          <span class="clock">10:10 PM</span>
          <svg width="16" height="18" viewBox="0 0 16 18" fill="none" stroke="#dfdbd2" stroke-width="2.200"><path d="M5 5A5 5 0 1 0 11 5M8 1V8"></path><path stroke-width="2" d="M0 9.500H3M13 9.500H16M8 14.500V17.500M2 3.500L4 5.500M14 3.500L12 5.500M2.500 15L4.500 13M13.500 15L11.500 13"></path></svg>
        </div>
      </div>
      <div class="body">
        <div class="dock">
          ${launcher.map((t) => html`<div class="tile ${t.cls ?? ""}"><svg viewBox="0 0 156 156">${t.art}</svg></div>`)}
          <div class="tile"><svg viewBox="0 0 156 156">${trash}</svg></div>
        </div>
        <div class="window">
          <div class="tabs">
            <div class="tab t1"><svg width="14" height="14" viewBox="0 0 14 14"><rect width="14" height="14" fill="#4460a0"></rect><path fill="#fff" d="M7.500 14V8.500H6V6.500H7.500V5Q7.500 2 10.500 2H12V4H11Q9.700 4 9.700 5.200V6.500H12L11.700 8.500H9.700V14Z"></path></svg><span class="label ui">(1) Facebook</span>${closeGlyph}</div>
            <div class="tab t2">
              <svg class="shape" width="236" height="28" viewBox="0 0 236 28"><path fill="#f3f2f1" d="M0 28Q9 27 12 18L16 7Q18 0 26 0H208Q216 0 219 7L224 18Q227 27 236 28Z"></path></svg>
              <svg class="fav" width="15" height="16" viewBox="0 0 16 16" fill="none" stroke-width="2.400"><circle cx="8" cy="8" r="8" fill="#fff"></circle><path stroke="#ea4335" d="M3.700 5.700A5 5 0 0 1 11.600 4.400"></path><path stroke="#fbbc05" d="M3.700 5.700A5 5 0 0 0 3.800 10.600"></path><path stroke="#34a853" d="M3.800 10.600A5 5 0 0 0 11.300 11.700"></path><path stroke="#4285f4" d="M11.300 11.700A5 5 0 0 0 13 8H8"></path></svg>
              <span class="label ui">activity diagram for...</span>${closeGlyph}</div>
            <div class="tab t3"><svg width="16" height="16" viewBox="0 0 16 16"><rect width="16" height="16" rx="1" fill="#0e76b4"></rect><path fill="#fff" d="M2.500 6.500H4.700V13H2.500ZM2.400 3H4.800V5.200H2.400ZM6.300 6.500H8.400V7.500Q9 6.300 10.700 6.300Q13.500 6.300 13.500 9.500V13H11.300V9.800Q11.300 8.200 10 8.200Q8.500 8.200 8.500 9.800V13H6.300Z"></path></svg><span class="label ui">Toll application - .N...</span>${closeGlyph}</div>
            <div class="tab t4"><svg width="16" height="16" viewBox="0 0 16 16"><rect width="16" height="16" fill="#000"></rect><path fill="none" stroke="#fff" stroke-width="2" d="M3 12V5M3 7.500Q4 5 6 5Q8 5 8 7.500V12M8 7.500Q9 5 11 5Q13 5 13 7.500V12"></path></svg><span class="label ui">UML Activity Diagra...</span>${closeGlyph}</div>
            <svg class="plus" width="14" height="14" viewBox="0 0 14 14"><path stroke="#fff" stroke-width="2.600" d="M7 .5V13.500M.5 7H13.500"></path></svg>
          </div>
          <div class="nav">
            <div class="back"><svg width="16" height="16" viewBox="0 0 16 16" fill="none" stroke="#4b4b4b" stroke-width="3.200"><path d="M8.500 1.500L2.500 8L8.500 14.500M3 8H15"></path></svg></div>
            <div class="url">
              <svg width="16" height="16" viewBox="0 0 16 16" fill="none" stroke="#6c6c6c"><circle cx="8" cy="8" r="6.800" stroke-width="1.200"></circle><path stroke-width="1.800" d="M8 7V12M8 4V5.700"></path></svg>
              <svg class="lock" width="17" height="16" viewBox="0 0 17 16"><path fill="none" stroke="#777" stroke-width="2" d="M3.500 7V4.500Q3.500 1.800 6 1.800Q8.500 1.800 8.500 4.500V7"></path><path fill="#777" d="M1.500 6.500H10.500V13H1.500Z"></path><path fill="#fcb90f" stroke="#fff" stroke-width=".8" d="M10.500 4.800L16.500 15.500H4.500Z"></path><path stroke="#fff" stroke-width="1.500" d="M10.500 8.500V12M10.500 13V14.300"></path></svg>
              <span class="bar"></span>
              <span class="address ui"><span class="scheme">https://www.</span><b>google.co.in</b><span class="query">/search?q=activity+diagram+for+user+registration&amp;client=ubuntu&amp;hs=orc&amp;channel=fs&amp;tbm=isch&amp;imgil=fyFGidaGZ-mJxM%253A%</span></span>
              <span class="pill ui">200%</span>
              <span class="bar zoom"></span>
              <svg width="13" height="14" viewBox="0 0 13 14"><path fill="none" stroke="#8291a1" stroke-width="2.200" d="M10 3.500A4.700 4.700 0 1 0 11 9"></path><path fill="#8291a1" d="M12 0V6H6.500Z"></path></svg>
            </div>
            <div class="search"><svg width="14" height="14" viewBox="0 0 14 14" fill="none" stroke="#8c8c8c"><circle cx="5.500" cy="5.200" r="4.200" stroke-width="1.800"></circle><path stroke-width="2.400" d="M8.500 8.500L13 13"></path></svg><span class="ui">Search</span></div>
            <div class="tools">
              <svg width="18" height="18" viewBox="0 0 18 18" fill="none" stroke="#555" stroke-width="1.800"><path d="M9 2L11.100 6.700L16.200 7.200L12.300 10.600L13.500 15.700L9 13L4.500 15.700L5.700 10.600L1.800 7.200L6.900 6.700Z"></path></svg>
              <span class="bar mark"></span>
              <svg width="14" height="16" viewBox="0 0 14 16"><path fill="#555" d="M1 3H4Q4.500 .5 7 .5Q9.500 .5 10 3H13V15.500H1Z"></path><path stroke="#f3f2f1" stroke-width="1.500" d="M3 6.500H4.500M5.500 6.500H11.500M3 9.300H4.500M5.500 9.300H11.500M3 12.200H4.500M5.500 12.200H11.500"></path></svg>
              <svg class="pocket" width="17" height="15" viewBox="0 0 17 15"><path fill="#555" d="M1.500 .5H15.500Q16.500 .5 16.500 1.500V6Q16.500 14 8.500 14.500Q.5 14 .5 6V1.500Q.5 .5 1.500 .5Z"></path><path fill="none" stroke="#fff" stroke-width="2" stroke-linecap="round" d="M5 5.500L8.500 9L12 5.500"></path></svg>
              <svg class="down" width="15" height="15" viewBox="0 0 15 15"><path fill="#555" d="M5 0H10V6.500H14.500L7.500 14.500L.5 6.500H5Z"></path></svg>
              <svg class="home" width="16" height="15" viewBox="0 0 16 15"><path fill="none" stroke="#555" stroke-width="1.700" d="M.8 8L8 1.300L15.200 8"></path><path fill="#555" d="M8 3.500L13 8.200V14.500H9.500V10H6.500V14.500H3V8.200Z"></path></svg>
              <span class="bar menu"></span>
              <svg width="16" height="13" viewBox="0 0 16 13"><path stroke="#4c4c4c" stroke-width="2.600" stroke-linecap="round" d="M1.500 1.500H14.500M1.500 6.500H14.500M1.500 11.500H14.500"></path></svg>
            </div>
          </div>
          <div class="page">
            <div class="view">
              <div class="notch"><svg width="40" height="6" viewBox="0 0 40 6"><path fill="#222" d="M0 6L6 0H34L40 6Z"></path></svg></div>
              <div class="viewer">
                <div class="arrow l"><svg width="28" height="46" viewBox="0 0 28 46"><path fill="none" stroke="#999" stroke-width="5" d="M27.500 1.500L3 23L27.500 44.500"></path></svg></div>
                <div class="photo">${orderFlow()}</div>
                <div class="details">
                  <div class="info">
                    <h1>UML Behavioural Diagrams</h1>
                    <p class="meta"><span>TutorialsPoint</span><span>-</span><span>580 × 581</span><span>-</span><span>Search by image</span></p>
                    <p class="desc">Activity Diagram</p>
                    <div class="buttons">
                      <div class="btn b1">Visit<br />page</div>
                      <div class="btn b2">View<br />image</div>
                      <div class="btn b3"><svg width="24" height="23" viewBox="0 0 24 23"><path fill="#aaa" fill-rule="evenodd" d="M12 0L15 8L24 8.500L17 14L19.500 23L12 18L4.500 23L7 14L0 8.500L9 8ZM12 9.200L11.100 11.900L8.400 12L10.500 13.700L9.800 16.300L12 14.800L14.200 16.300L13.500 13.700L15.600 12L12.900 11.900Z"></path></svg>Save</div>
                      <div class="btn b4">View<br />saved</div>
                      <div class="btn b5"><svg width="23" height="24" viewBox="0 0 23 24"><g fill="#aaa"><circle cx="4" cy="12" r="3.600"></circle><circle cx="18.500" cy="4" r="3.300"></circle><circle cx="18.500" cy="20" r="3.300"></circle></g><path fill="none" stroke="#aaa" stroke-width="2.200" d="M18.500 4L4 12L18.500 20"></path></svg>Share</div>
                    </div>
                  </div>
                  <div class="related">
                    <h2>Related images:</h2>
                    <div class="grid">
                      <div class="cell on">${orderFlow()}</div>
                      <div class="cell">${depositFlow()}</div>
                      <div class="cell">${attendance()}</div>
                      <div class="cell">${authFlow()}</div>
                      <div class="cell">${searchFlow()}</div>
                      <div class="cell">${durationFlow()}</div>
                      <div class="cell">${insuranceFlow()}</div>
                      <div class="cell">${vehicleFlow()}<div class="more">View<br />more</div></div>
                    </div>
                    <div class="foot">Images may be subject to copyright. &nbsp;<span>-&nbsp; Send feedback</span></div>
                  </div>
                  <svg class="x" width="40" height="40" viewBox="0 0 40 40"><path stroke="#555" stroke-width="3.800" d="M1 1L39 39M39 1L1 39"></path></svg>
                </div>
                <div class="arrow r"><svg width="28" height="46" viewBox="0 0 28 46"><path fill="none" stroke="#999" stroke-width="5" d="M.5 1.500L25 23L.5 44.500"></path></svg></div>
              </div>
              ${resultsStrip()}
            </div>
            <div class="vbar"><div></div></div>
            <div class="hbar"><div></div></div>
          </div>
          <div class="status ui">https://www.tutorialspoint.com/object_oriented_analysis_design/ooad_uml_behavioural_diagrams.htm</div>
        </div>
      </div>
    </div>`;
  }
}
